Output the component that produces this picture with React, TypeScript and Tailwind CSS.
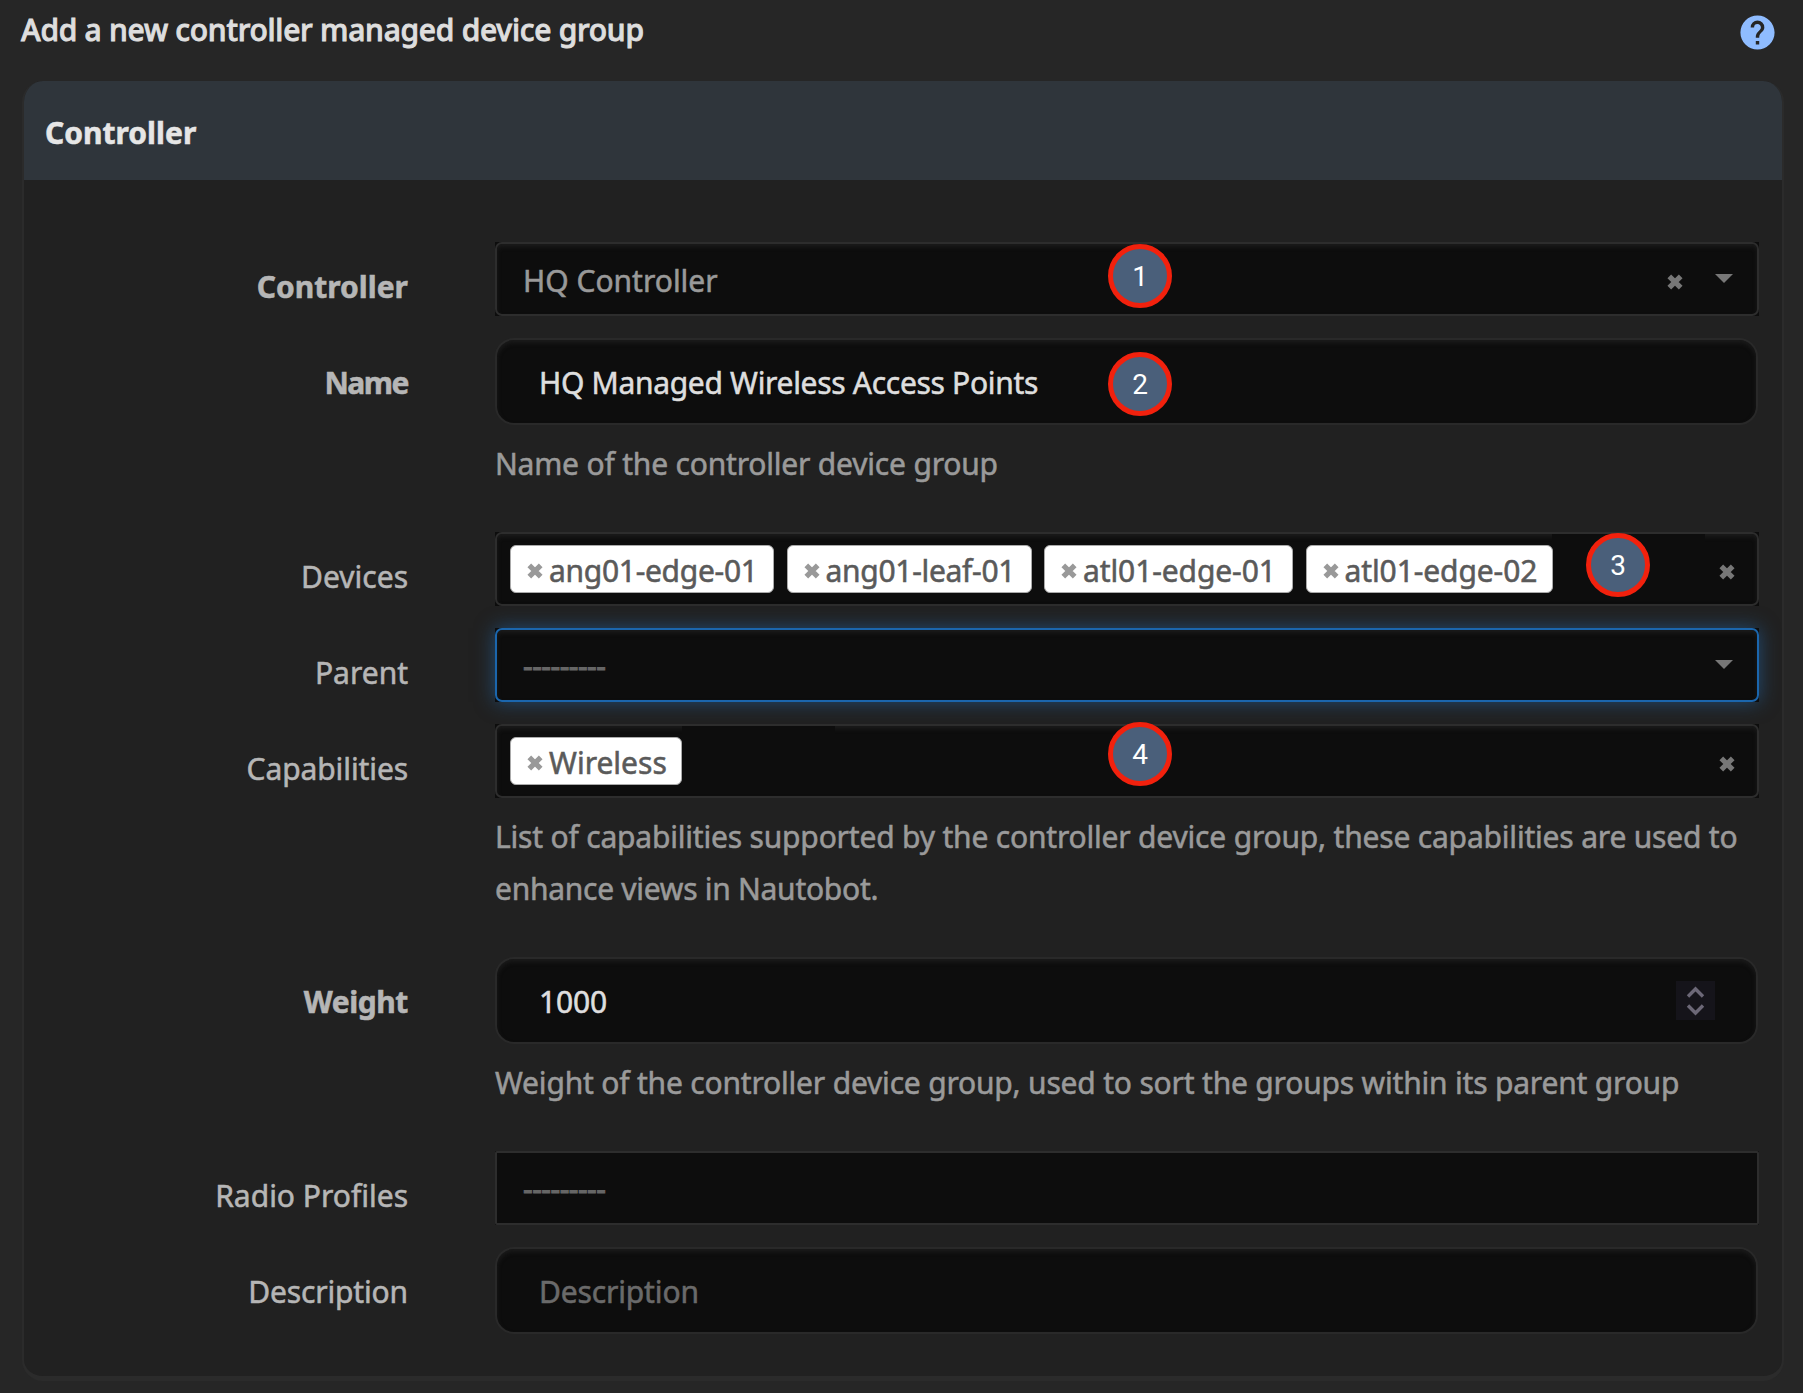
import type { ReactNode } from "react";

function Cross({ className = "" }: { className?: string }) {
  return (
    <svg viewBox="0 0 16 16" className={`size-4 shrink-0 ${className}`} aria-hidden="true">
      <path d="M2.3 2.3 13.7 13.7M13.7 2.3 2.3 13.7" stroke="currentColor" strokeWidth="5.2" fill="none" />
    </svg>
  );
}

function Caret({ className = "" }: { className?: string }) {
  return (
    <svg viewBox="0 0 18 9" className={`-mt-[2px] h-[9px] w-[18px] shrink-0 text-[#777] ${className}`} aria-hidden="true">
      <path d="M0 0H18L9 9Z" fill="currentColor" />
    </svg>
  );
}

function Badge({ n, className }: { n: number; className: string }) {
  return (
    <span
      className={`absolute z-10 flex size-16 items-center justify-center rounded-full border-[5px] border-[#f2210d] bg-[#4a5f7a] pt-px font-['Roboto',sans-serif] text-[28px] leading-none text-white [-webkit-text-stroke:0px] ${className}`}
    >
      {n}
    </span>
  );
}

function Row({
  label,
  bold = false,
  tracking = "",
  help,
  children,
}: {
  label: string;
  bold?: boolean;
  tracking?: string;
  help?: ReactNode;
  children: ReactNode;
}) {
  return (
    <div className="flex gap-[87px]">
      <label
        className={`w-[384px] shrink-0 pt-[19px] text-right leading-[52px] text-[#b6b6b6] ${bold ? "font-bold" : ""} ${tracking}`}
      >
        {label}
      </label>
      <div className="w-[1264px] shrink-0">
        {children}
        {help && (
          <p className="mb-5 whitespace-nowrap pt-[13px] leading-[52px] tracking-[-0.19px] text-[#9a9a9a]">{help}</p>
        )}
      </div>
    </div>
  );
}

function Select({ focused = false, square = false, children }: { focused?: boolean; square?: boolean; children: ReactNode }) {
  return (
    <div className={`relative bg-[#0d0d0d] ${focused ? "shadow-[0_0_18px_rgba(34,104,170,0.6)]" : ""}`}>
      <div
        className={`flex h-[74px] items-center border-2 ${square ? "rounded-[2px]" : "rounded-[7px] shadow-[inset_0_3px_4px_rgba(40,40,40,0.5)]"} ${
          focused ? "border-[#1b66ad]" : "border-[#2d2d2d]"
        }`}
      >
        {children}
      </div>
    </div>
  );
}

function Input({ children }: { children: ReactNode }) {
  return (
    <div className="relative mr-px flex h-[87px] items-center rounded-[19px] border-2 border-[#292929] bg-[#0d0d0d] pl-[42px] pt-[3px] shadow-[inset_0_3px_4px_rgba(40,40,40,0.5)]">
      {children}
    </div>
  );
}

function Chip({ text, className }: { text: string; className: string }) {
  return (
    <span
      className={`flex h-12 shrink-0 items-center gap-1.5 whitespace-nowrap rounded-[6px] border border-[#aaa] bg-white pl-4 text-[#5a5a5a] ${className}`}
    >
      <Cross className="mt-1 text-[#999]" />
      <span className="pt-[2px]">{text}</span>
    </span>
  );
}

const dashes = "---------";

export default function App() {
  return (
    <div className="h-[1393px] w-[1806px] overflow-hidden bg-white">
      <div className="h-full w-[1803px] overflow-hidden bg-[#262626] font-['Noto_Sans',sans-serif] text-[30px] [-webkit-text-stroke:0.55px_currentColor]">
        <header className="flex h-[81px] items-start justify-between pl-[21px] pr-[25px]">
          <h1 className="pt-1 font-medium leading-[52px] tracking-[-0.27px] text-[#dedede] [-webkit-text-stroke:0.9px_currentColor]">
            Add a new controller managed device group
          </h1>
          <svg viewBox="0 0 24 24" className="mt-3 size-[41px] text-[#8fbcff]" fill="currentColor" aria-label="Help">
            <path d="M15.07 11.25L14.17 12.17C13.45 12.89 13 13.5 13 15H11V14.5C11 13.39 11.45 12.39 12.17 11.67L13.41 10.41C13.78 10.05 14 9.55 14 9C14 7.89 13.1 7 12 7A2 2 0 0 0 10 9H8A4 4 0 0 1 12 5A4 4 0 0 1 16 9C16 9.88 15.64 10.67 15.07 11.25M13 19H11V17H13M12 2A10 10 0 0 0 2 12A10 10 0 0 0 12 22A10 10 0 0 0 22 12C22 6.47 17.5 2 12 2Z" />
          </svg>
        </header>

        <section className="ml-[22px] h-[1300px] w-[1762px] overflow-hidden rounded-[21px] border-2 border-t-0 border-b-[5px] border-[#2b2b2b] bg-[#212121]">
          <h2 className="h-[99px] bg-[#2f353b] pl-[21px] pt-[26px] font-bold leading-[52px] text-[#e6e6e6]">Controller</h2>

          <form className="flex flex-col gap-[22px] pt-[62px]">
            <Row label="Controller" bold>
              <Select>
                <span className="pl-[26px] pt-[2px] text-[#999]">HQ Controller</span>
                <Cross className="ml-auto mt-1.5 text-[#777]" />
                <Caret className="ml-8 mr-6" />
                <Badge n={1} className="left-[613px] top-[2px]" />
              </Select>
            </Row>

            <Row label="Name" bold tracking="tracking-[-1.5px]" help="Name of the controller device group">
              <Input>
                <span className="-mt-px tracking-[-0.31px] text-[#dedede]">HQ Managed Wireless Access Points</span>
                <Badge n={2} className="left-[611px] top-[12px]" />
              </Input>
            </Row>

            <Row label="Devices">
              <Select>
                <div className="flex gap-[12.5px] pl-[13px]">
                  <Chip text="ang01-edge-01" className="w-[264px] tracking-[-0.3px]" />
                  <Chip text="ang01-leaf-01" className="w-[245px] tracking-[-0.3px]" />
                  <Chip text="atl01-edge-01" className="w-[249px] tracking-[-0.1px]" />
                  <Chip text="atl01-edge-02" className="w-[247px] tracking-[-0.1px]" />
                </div>
                <span className="absolute left-[1057px] top-[2px] h-2 w-[153px] bg-[#0d0d0d]" />
                <Cross className="ml-auto mr-[22px] mt-1.5 text-[#777]" />
                <Badge n={3} className="left-[1091px] top-px" />
              </Select>
            </Row>

            <Row label="Parent">
              <Select focused>
                <span className="pl-[26px] tracking-[-0.5px] text-[#666] [-webkit-text-stroke:1px_currentColor]">{dashes}</span>
                <Caret className="ml-auto mr-6" />
              </Select>
            </Row>

            <Row
              label="Capabilities"
              tracking="tracking-[-0.1px]"
              help={
                <>
                  List of capabilities supported by the controller device group, these capabilities are used to
                  <br />
                  <span className="tracking-[-0.27px]">enhance views in Nautobot.</span>
                </>
              }
            >
              <Select>
                <div className="pl-[13px]">
                  <Chip text="Wireless" className="w-[172px]" />
                </div>
                <span className="absolute left-[187px] top-[2px] h-2 w-[153px] bg-[#0d0d0d]" />
                <Cross className="ml-auto mr-[22px] mt-1.5 text-[#777]" />
                <Badge n={4} className="-top-[2px] left-[613px]" />
              </Select>
            </Row>

            <Row
              label="Weight"
              bold
              tracking="tracking-[-0.4px]"
              help="Weight of the controller device group, used to sort the groups within its parent group"
            >
              <Input>
                <span className="-mt-px tracking-[-0.2px] text-[#dedede]">1000</span>
                <svg viewBox="0 0 39 39" className="-mt-[4px] ml-auto mr-[41px] size-[39px] bg-[#15141a]" aria-hidden="true">
                  <path d="M12 15.5 19.5 8 27 15.5M12 24.5 19.5 32 27 24.5" fill="none" stroke="#6c6877" strokeWidth="3.4" />
                </svg>
              </Input>
            </Row>

            <Row label="Radio Profiles">
              <Select square>
                <span className="pl-[26px] tracking-[-0.5px] text-[#666] [-webkit-text-stroke:1px_currentColor]">{dashes}</span>
              </Select>
            </Row>

            <Row label="Description" tracking="tracking-[-0.15px]">
              <Input>
                <span className="-mt-[2px] tracking-[-0.15px] text-[#6a6a6a]">Description</span>
              </Input>
            </Row>
          </form>
        </section>
      </div>
    </div>
  );
}
